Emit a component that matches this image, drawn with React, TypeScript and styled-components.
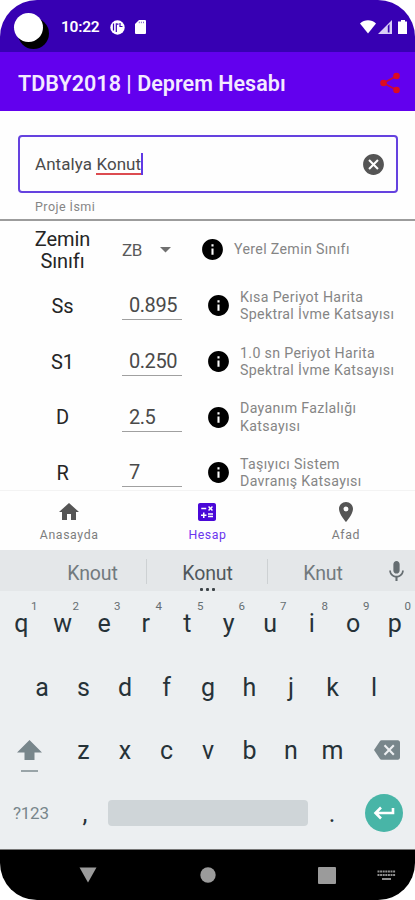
import React from "react";
import styled, { createGlobalStyle } from "styled-components";
import { MdHome, MdCalculate, MdPlace, MdMic, MdCancel, MdInfo, MdBackspace } from "react-icons/md";

const Global = createGlobalStyle`
  * { box-sizing: border-box; }
  body { margin: 0; background: #fff; font-family: Roboto, "Noto Sans", sans-serif; }
  svg { display: block; flex: none; }
`;

const Phone = styled.main`
  width: 415px; height: 900px; display: flex; flex-direction: column;
  overflow: hidden; background: #fefefe; border-radius: 37px;
`;

const StatusBar = styled.header`
  height: 52px; flex: none; background: #3700b3; display: flex; align-items: center;
  padding: 2px 8px 0 14px; color: #fff;
`;
const Camera = styled.div`
  width: 29px; height: 29px; border-radius: 50%; background: #fff; box-shadow: 5px 6px 0 1px #000;
`;
const Clock = styled.span`
  margin: 0 11px 0 18px; width: 38px; font-size: 15.5px; font-weight: 600; letter-spacing: -0.25px; white-space: nowrap;
`;
const StatusIcons = styled.div`display: flex; align-items: center; gap: 10px;`;
const SignalIcons = styled.div`margin-left: auto; display: flex; align-items: center; gap: 2px;`;

const AppBar = styled.div`
  height: 59px; flex: none; background: #6200ee; display: flex; align-items: center;
  justify-content: space-between; padding: 3px 14px 0 18px;
`;
const Title = styled.h1`
  margin: 2px 0 0; color: #f3eaff; font-size: 21.5px; font-weight: 600; letter-spacing: 0.04px; line-height: 26px; white-space: nowrap;
`;

const Content = styled.section`height: 379px; flex: none; overflow: hidden; display: flex; flex-direction: column;`;
const ProjectField = styled.div`
  margin: 24px 17px 0 18px; height: 58px; flex: none; border: 2px solid #6542df; border-radius: 4px;
  display: flex; align-items: center; justify-content: space-between; padding: 0 10px 0 15px;
`;
const ProjectValue = styled.div`
  display: flex; align-items: center; font-size: 17px; color: #4b4b4b; letter-spacing: 0.07px; white-space: pre;
`;
const Misspelled = styled.span`border-bottom: 2px solid #dc4b50; line-height: 18px; margin-top: 2px;`;
const Caret = styled.i`width: 2px; height: 22px; background: #6039e4;`;
const Helper = styled.div`
  height: 26px; flex: none; padding: 6px 0 0 35px; font-size: 12.5px; line-height: 16px; letter-spacing: 0.45px; color: #858585;
`;
const Divider = styled.hr`margin: 0; height: 2px; flex: none; border: 0; background: #9c9c9c;`;

const Row = styled.div<{ $first?: boolean }>`
  height: ${p => p.$first ? "57px" : "55.7px"}; flex: none;
  display: grid; align-items: center;
  grid-template-columns: ${p => p.$first ? "125px 75px 34px 1fr" : "125px 81px 34px 1fr"};
`;
const RowLabel = styled.div`
  width: 70px; justify-self: center; text-align: center; font-size: 20px; line-height: 22px; color: #252525; letter-spacing: -0.1px;
`;
const SpinnerBox = styled.div`
  display: flex; align-items: center; gap: 18px; margin-left: -3px;
  font-size: 17px; letter-spacing: -0.4px; color: #5a5a5a;
`;
const NumberValue = styled.div`
  width: 60px; height: 29px; margin: 0 0 0 -3px; padding-left: 7px; border-bottom: 1.5px solid #a0a0a0;
  font-size: 20px; line-height: 29px; color: #4a4a4a; letter-spacing: -0.45px;
`;
const Description = styled.div`
  font-size: 14.2px; line-height: 17.5px; color: #858585; letter-spacing: 0.34px; white-space: pre-line; padding-top: 1px;
`;

const BottomNav = styled.nav`
  height: 60px; flex: none; border-top: 1px solid #f3f3f3; display: grid; grid-template-columns: repeat(3, 1fr);
`;
const NavItem = styled.div<{ $active?: boolean }>`
  display: flex; flex-direction: column; align-items: center; padding-top: 9px; gap: 3px;
  color: ${p => p.$active ? "#6a35ee" : "#7d7d7d"};
  font-size: 12.3px; line-height: 16px; letter-spacing: 0.6px;
  svg { color: ${p => p.$active ? "#4a08d8" : "#555"}; }
`;

const Keyboard = styled.section`height: 299px; flex: none; background: #eceff1; display: flex; flex-direction: column;`;
const Suggestions = styled.div`
  height: 41px; flex: none; background: #e4e7e9; display: grid; grid-template-columns: 38px 109px 121px 110px 37px;
`;
const Suggestion = styled.div<{ $main?: boolean; $line?: boolean }>`
  position: relative;
  display: flex; align-items: center; justify-content: center; padding-top: 5px;
  font-size: 19.5px; letter-spacing: -0.1px; color: ${p => p.$main ? "#50585c" : "#727a7e"};
  &::after {
    content: ""; display: ${p => p.$line ? "block" : "none"};
    position: absolute; right: 0; top: 9px; width: 1px; height: 25px; background: #cdd1d3;
  }
`;
const MoreDots = styled.div`
  position: absolute; bottom: 0; left: 0; right: 0; display: flex; justify-content: center; gap: 3px;
  i { width: 3px; height: 3px; border-radius: 1px; background: #3c4347; }
`;
const MicSlot = styled.div`display: flex; align-items: center; justify-content: center; color: #656d71; padding-top: 1px;`;

const KeyRow = styled.div<{ $height: number; $inset?: number }>`
  height: ${p => p.$height}px; flex: none; display: flex; padding: 0 ${p => p.$inset ?? 0}px;
`;
const Key = styled.div`
  flex: 1; position: relative; display: flex; align-items: center; justify-content: center;
  padding: 2px 0 0 1px;
  font-size: 25px; line-height: 30px; color: #263238;
`;
const KeyHint = styled.sup`
  position: absolute; left: 31px; top: 8px; font-size: 11.5px; line-height: 14px; color: #666e72;
`;
const SideKey = styled.div<{ $shift?: boolean }>`
  width: 62.25px; display: flex; align-items: center; color: #78868b;
  padding: ${p => p.$shift ? "13px 0 0 17px" : "0 0 0 21px"};
`;
const BottomKeys = styled.div`
  height: 63px; flex: none; display: grid; grid-template-columns: 62px 46px 200px 48px 59px; align-items: center;
`;
const SymbolKey = styled.div`padding: 1px 0 0 13px; font-size: 17px; color: #78868b; letter-spacing: -0.25px;`;
const Punctuation = styled.div`
  padding-top: 2px; text-align: center; font-size: 25px; line-height: 30px; color: #263238;
`;
const SpaceKey = styled.div`height: 26px; border-radius: 4px; background: #cfd5d8;`;
const EnterKey = styled.div`
  width: 38px; height: 38px; margin-left: 9px; border-radius: 50%; background: #48b5a7;
  display: flex; align-items: center; justify-content: center;
`;

const SystemNav = styled.footer`
  height: 51px; flex: none; background: #000; border-top: 1px solid #777;
  display: grid; grid-template-columns: 176px 63px 176px; align-items: center; justify-items: center;
`;
const RecentGroup = styled.div`width: 176px; display: flex; align-items: center; padding-left: 79px; gap: 41px;`;

const rows = [
  { label: "Ss", value: "0.895", text: "Kısa Periyot Harita\nSpektral İvme Katsayısı" },
  { label: "S1", value: "0.250", text: "1.0 sn Periyot Harita\nSpektral İvme Katsayısı" },
  { label: "D", value: "2.5", text: "Dayanım Fazlalığı\nKatsayısı" },
  { label: "R", value: "7", text: "Taşıyıcı Sistem\nDavranış Katsayısı" },
];

export default function App() {
  return (
    <>
      <Global />
      <Phone>
        <StatusBar>
          <Camera />
          <Clock>10:22</Clock>
          <StatusIcons>
            <svg width="15" height="15" viewBox="0 0 15 15">
              <circle cx="7.5" cy="7.5" r="7.2" fill="#fff" />
              <path d="M6.300 3.300v8.800M7 4.200h1.500M10 3v3.500h2.500M3.500 3.500v7" fill="none" stroke="#3700b3" strokeWidth="1.2" />
            </svg>
            <svg width="11" height="14" viewBox="0 0 11 14">
              <path d="M4 0h6a1 1 0 0 1 1 1v12a1 1 0 0 1-1 1H1a1 1 0 0 1-1-1V4z" fill="#fff" />
              <path d="M4.300 1.700v1.500M6.400 1.700v1.500M8.500 1.700v1.500" stroke="#3700b3" strokeWidth=".6" />
            </svg>
          </StatusIcons>
          <SignalIcons>
            <svg width="16" height="14" viewBox="0 0 16 14"><path d="M0 3.500C4.500-.7 11.500-.7 16 3.500L8 13.500z" fill="#fff" /></svg>
            <svg width="14" height="14" viewBox="0 0 14 14">
              <path d="M0 14 14 0v14z" fill="#d8cef6" />
              <path d="M9.800 6v6.500h1.700V4z" fill="#3700b3" />
            </svg>
            <svg width="13" height="14" viewBox="0 0 13 14"><path d="M7 0h4v1.500h2V14H4V1.500h3z" fill="#fff" /></svg>
          </SignalIcons>
        </StatusBar>
        <AppBar>
          <Title>TDBY2018 | Deprem Hesabı</Title>
          <svg width="22" height="22" viewBox="0 0 22 22">
            <path d="M17.500 4 4.500 11l13 7" fill="none" stroke="#c4083c" strokeWidth="1.700" />
            <g fill="#dc0b20"><circle cx="17.500" cy="4" r="3.300" /><circle cx="4.500" cy="11" r="3.300" /><circle cx="17.500" cy="18" r="3.300" /></g>
          </svg>
        </AppBar>
        <Content>
          <ProjectField>
            <ProjectValue>Antalya <Misspelled>Konut</Misspelled><Caret /></ProjectValue>
            <MdCancel size={25} color="#555" />
          </ProjectField>
          <Helper>Proje İsmi</Helper>
          <Divider />
          <Row $first>
            <RowLabel>Zemin Sınıfı</RowLabel>
            <SpinnerBox>
              ZB
              <svg width="11" height="6" viewBox="0 0 11 6"><path d="M0 0h11L5.500 5.500z" fill="#707070" /></svg>
            </SpinnerBox>
            <MdInfo size={25} color="#000" />
            <Description>Yerel Zemin Sınıfı</Description>
          </Row>
          {rows.map(row => (
            <Row key={row.label}>
              <RowLabel>{row.label}</RowLabel>
              <NumberValue>{row.value}</NumberValue>
              <MdInfo size={25} color="#000" />
              <Description>{row.text}</Description>
            </Row>
          ))}
        </Content>
        <BottomNav>
          <NavItem><MdHome size={24} />Anasayda</NavItem>
          <NavItem $active><MdCalculate size={24} />Hesap</NavItem>
          <NavItem><MdPlace size={24} />Afad</NavItem>
        </BottomNav>
        <Keyboard>
          <Suggestions>
            <span />
            <Suggestion $line>Knout</Suggestion>
            <Suggestion $main $line>Konut<MoreDots><i /><i /><i /></MoreDots></Suggestion>
            <Suggestion>Knut</Suggestion>
            <MicSlot><MdMic size={25} /></MicSlot>
          </Suggestions>
          <KeyRow $height={64}>
            {[..."qwertyuiop"].map((letter, i) => (
              <Key key={letter}>{letter}<KeyHint>{(i + 1) % 10}</KeyHint></Key>
            ))}
          </KeyRow>
          <KeyRow $height={63} $inset={20.75}>
            {[..."asdfghjkl"].map(letter => <Key key={letter}>{letter}</Key>)}
          </KeyRow>
          <KeyRow $height={63}>
            <SideKey $shift>
              <svg width="25" height="32" viewBox="0 0 25 32">
                <path d="M12.500 0 25 12.500h-7.500V20h-10v-7.500H0z" fill="#78868b" />
                <path d="M4 31h17" stroke="#8b979b" strokeWidth="1.700" />
              </svg>
            </SideKey>
            {[..."zxcvbnm"].map(letter => <Key key={letter}>{letter}</Key>)}
            <SideKey><MdBackspace size={26} /></SideKey>
          </KeyRow>
          <BottomKeys>
            <SymbolKey>?123</SymbolKey>
            <Punctuation>,</Punctuation>
            <SpaceKey />
            <Punctuation>.</Punctuation>
            <EnterKey>
              <svg width="22" height="14" viewBox="0 0 22 14">
                <path d="M20 2v5H3M8 1.500 2.500 7 8 12.500" fill="none" stroke="#fff" strokeWidth="2.600" />
              </svg>
            </EnterKey>
          </BottomKeys>
        </Keyboard>
        <SystemNav>
          <svg width="18" height="16" viewBox="0 0 18 16"><path d="M.5.500h17L9 15.500z" fill="#9b9b9b" /></svg>
          <svg width="16" height="16" viewBox="0 0 16 16"><circle cx="8" cy="8" r="7.700" fill="#9b9b9b" /></svg>
          <RecentGroup>
            <svg width="18" height="17" viewBox="0 0 18 17"><rect width="18" height="17" rx="1" fill="#9b9b9b" /></svg>
            <svg width="19" height="11" viewBox="0 0 19 11">
              <path d="M.5 1.500h18M.5 5h18" stroke="#909090" strokeWidth="2" strokeDasharray="2 .6" />
              <path d="M5 9h9" stroke="#909090" strokeWidth="2" />
            </svg>
          </RecentGroup>
        </SystemNav>
      </Phone>
    </>
  );
}
